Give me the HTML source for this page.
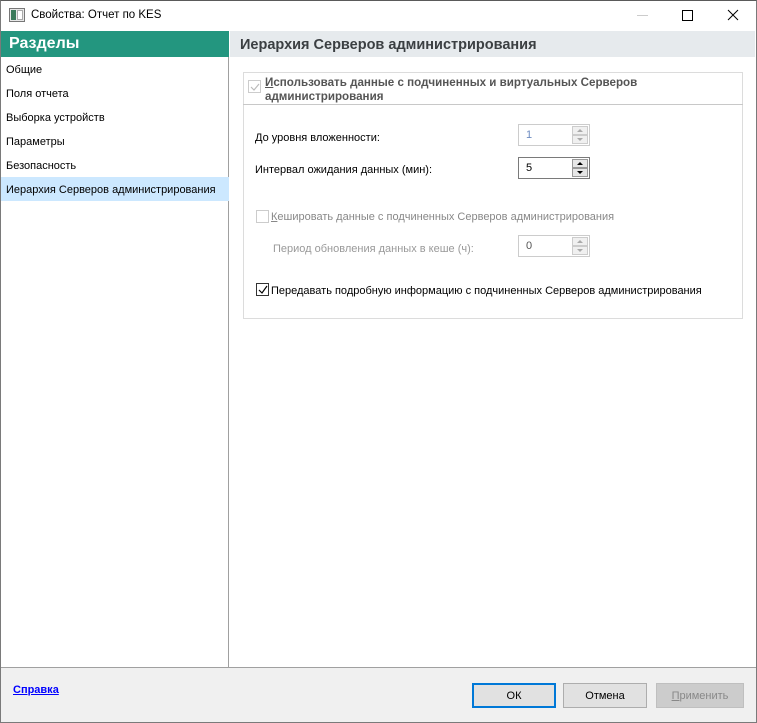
<!DOCTYPE html>
<html><head><meta charset="utf-8"><style>
*{margin:0;padding:0;box-sizing:border-box}
body{width:757px;height:723px;position:relative;background:#fff;font-family:"Liberation Sans","Noto Sans CJK SC",sans-serif;font-size:11px;color:#000;overflow:hidden;white-space:nowrap}
.abs{position:absolute}
#win{left:0;top:0;width:757px;height:723px;border:1px solid #7a7a7a;border-top-color:#5a5a5a}
.side{left:1px;top:31px;width:228px;height:637px;background:#fff;border-right:1px solid #a0a0a0}
.sh{left:1px;top:31px;width:228px;height:26px;background:#23967f;color:#fff;font-weight:bold;font-size:16px;padding:4px 0 0 8px}
.it{left:1px;width:228px;height:24px;padding:7px 0 0 5px;font-size:11px}
.rh{left:230px;top:31px;width:525px;height:26px;background:#e6eaed;color:#3b3f42;font-weight:bold;font-size:14.5px;padding:6px 0 0 10px}
.grp{left:243px;top:72px;width:500px;height:247px;border:1px solid #dcdcdc}
.ghead{left:243px;top:72px;width:500px;height:33px;border-bottom:1px solid #c8c8c8}
.cb{width:13px;height:13px;border:1px solid #333;background:#fff}
.cb.dis{border-color:#ccc}
.spin{width:72px;height:22px;border:1px solid #ccc;background:#fff}
.spin .v{position:absolute;left:7px;top:4px;font-size:11px}
.spin .b{position:absolute;right:1px;top:1px;width:16px;height:9px;background:#f0f0f0;border:1px solid #ccc}
.spin .b::after{content:"";position:absolute;left:4px;top:2px;border-left:3px solid transparent;border-right:3px solid transparent;border-bottom:3px solid #aaa}
.spin .b.d::after{border-bottom:none;border-top:3px solid #aaa}
.spin.act .b{background:#e6e6e6;border-color:#999}
.spin.act .b::after{border-bottom-color:#000}
.spin.act .b.d::after{border-top-color:#000}
.bottom{left:1px;top:667px;width:755px;height:55px;background:#f0f0f0;border-top:1px solid #a0a0a0}
.btn{top:683px;height:25px;width:84px;background:#e1e1e1;border:1px solid #adadad;text-align:center;padding-top:6px}
</style></head><body>
<div id="win" class="abs"></div>
<div class="abs" style="left:9px;top:8px;width:16px;height:14px;border:1px solid #777;background:#e8e8e8"><div style="position:absolute;left:1px;top:1px;width:5px;height:10px;background:#3b7a5a"></div><div style="position:absolute;left:7px;top:1px;width:6px;height:10px;background:#fff;border:1px solid #aaa"></div></div>
<div class="abs" style="left:31px;top:9px;font-size:11.5px;color:#000">Свойства: Отчет по KES</div>
<div class="abs" style="left:637px;top:15px;width:11px;height:1px;background:#ccc"></div>
<div class="abs" style="left:682px;top:10px;width:11px;height:11px;border:1px solid #000"></div>
<svg class="abs" style="left:727px;top:9px" width="12" height="12"><path d="M1 1L11 11M11 1L1 11" stroke="#000" stroke-width="1"/></svg>

<div class="abs side"></div>
<div class="abs sh">Разделы</div>
<div class="abs it" style="top:57px">Общие</div>
<div class="abs it" style="top:81px">Поля отчета</div>
<div class="abs it" style="top:105px">Выборка устройств</div>
<div class="abs it" style="top:129px">Параметры</div>
<div class="abs it" style="top:153px">Безопасность</div>
<div class="abs it" style="top:177px;background:#cce8ff">Иерархия Серверов администрирования</div>

<div class="abs rh">Иерархия Серверов администрирования</div>

<div class="abs grp"></div>
<div class="abs ghead"></div>
<div class="abs cb dis" style="left:248px;top:80px"></div>
<svg class="abs" style="left:249px;top:81px" width="12" height="12"><path d="M2 6L5 9L10 3" stroke="#bbb" fill="none" stroke-width="1.2"/></svg>
<div class="abs" style="left:265px;top:76px;font-weight:bold;color:#555;line-height:14px;font-size:11.6px"><u>И</u>спользовать данные с подчиненных и виртуальных Серверов<br>администрирования</div>

<div class="abs" style="left:255px;top:132px">До уровня вложенности:</div>
<div class="abs spin" style="left:518px;top:124px"><span class="v" style="color:#6d8bc0">1</span><div class="b"></div><div class="b d" style="top:10px"></div></div>
<div class="abs" style="left:255px;top:164px">Интервал ожидания данных (мин):</div>
<div class="abs spin act" style="left:518px;top:157px;border-color:#7a7a7a"><span class="v">5</span><div class="b"></div><div class="b d" style="top:10px"></div></div>

<div class="abs cb dis" style="left:256px;top:210px"></div>
<div class="abs" style="left:271px;top:211px;color:#888"><u>К</u>ешировать данные с подчиненных Серверов администрирования</div>
<div class="abs" style="left:273px;top:243px;color:#999">Период обновления данных в кеше (ч):</div>
<div class="abs spin" style="left:518px;top:235px"><span class="v" style="color:#555">0</span><div class="b"></div><div class="b d" style="top:10px"></div></div>

<div class="abs cb" style="left:256px;top:283px"></div>
<svg class="abs" style="left:257px;top:284px" width="12" height="12"><path d="M2 6L5 9L10 2" stroke="#000" fill="none" stroke-width="1.2"/></svg>
<div class="abs" style="left:271px;top:285px">Передавать по<u>д</u>робную информацию с подчиненных Серверов администрирования</div>

<div class="abs bottom"></div>
<div class="abs" style="left:13px;top:684px;color:#0000ff;font-weight:bold;text-decoration:underline">Справка</div>
<div class="abs btn" style="left:472px;border:2px solid #0078d7;padding-top:5px">ОК</div>
<div class="abs btn" style="left:563px">Отмена</div>
<div class="abs btn" style="left:656px;width:88px;background:#cccccc;border-color:#bfbfbf;color:#888"><u>П</u>рименить</div>
</body></html>
